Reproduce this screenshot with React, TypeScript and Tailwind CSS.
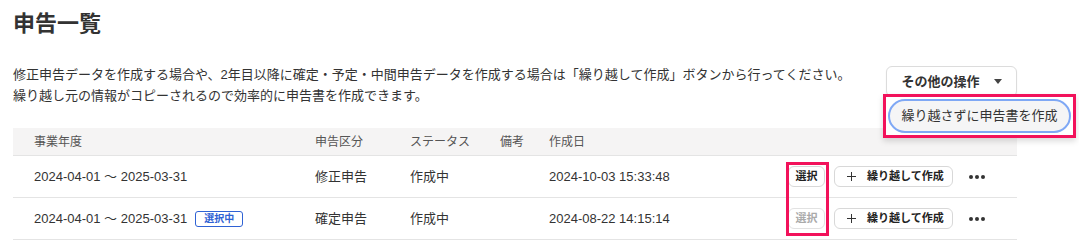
import React from "react";

type Row = {
  period: string;
  kind: string;
  status: string;
  created: string;
  current: boolean;
};

const rows: Row[] = [
  {
    period: "2024-04-01 ～ 2025-03-31",
    kind: "修正申告",
    status: "作成中",
    created: "2024-10-03 15:33:48",
    current: false,
  },
  {
    period: "2024-04-01 ～ 2025-03-31",
    kind: "確定申告",
    status: "作成中",
    created: "2024-08-22 14:15:14",
    current: true,
  },
];

function Caret() {
  return (
    <svg width="8" height="5" viewBox="0 0 8 5" className="ml-[14px]">
      <path d="M0 0h8L4 5z" fill="#444" />
    </svg>
  );
}

function Plus() {
  return (
    <svg width="9" height="9" viewBox="0 0 9 9">
      <path d="M4.5 0v9M0 4.5h9" stroke="#333" strokeWidth="1" />
    </svg>
  );
}

function TableRow({ row }: { row: Row }) {
  return (
    <div className="flex h-[42px] items-center border-b border-[#e4e4e4] pl-[21px] text-[13px] text-[#333]">
      <div className="flex w-[281px] items-center">
        <span>{row.period}</span>
        {row.current && (
          <span className="ml-[8px] flex h-[16px] items-center rounded-[3px] border border-[#2f62d4] px-[8px] text-[10px] font-bold text-[#2f62d4]">
            選択中
          </span>
        )}
      </div>
      <div className="w-[95px]">{row.kind}</div>
      <div className="w-[90px]">{row.status}</div>
      <div className="w-[49px]"></div>
      <div className="w-[239px]">{row.created}</div>
      <div className="flex items-center">
        <button
          className={
            row.current
              ? "flex h-[21px] w-[37px] items-center justify-center rounded-[6px] border border-[#e2e2e2] bg-white text-[11px] font-bold text-[#aaa]"
              : "flex h-[21px] w-[37px] items-center justify-center rounded-[6px] border border-[#d8d8d8] bg-white text-[11px] font-bold text-[#222]"
          }
        >
          選択
        </button>
        <button className="ml-[9px] flex h-[21px] w-[119px] items-center rounded-[6px] border border-[#d8d8d8] bg-white pl-[12px] text-[11px] font-bold text-[#222]">
          <Plus />
          <span className="ml-[11px]">繰り越して作成</span>
        </button>
        <span className="ml-[16px] flex gap-[2px]">
          <span className="h-[4px] w-[4px] rounded-full bg-[#333]"></span>
          <span className="h-[4px] w-[4px] rounded-full bg-[#333]"></span>
          <span className="h-[4px] w-[4px] rounded-full bg-[#333]"></span>
        </span>
      </div>
    </div>
  );
}

export default function App() {
  return (
    <div
      className="h-[247px] w-[1079px] overflow-hidden bg-white pl-[13px] pt-[8px] text-[#333]"
      style={{ fontFamily: '"Liberation Sans", "Noto Sans CJK JP", sans-serif' }}
    >
      <h1 className="text-[22px] font-bold leading-[32px] text-[#333]">申告一覧</h1>

      <div className="mt-[24px] flex w-[1004px] items-start justify-between">
        <p className="text-[13px] leading-[21px]">
          修正申告データを作成する場合や、2年目以降に確定・予定・中間申告データを作成する場合は「繰り越して作成」ボタンから行ってください。
          <br />
          繰り越し元の情報がコピーされるので効率的に申告書を作成できます。
        </p>
        <div className="relative mt-[2px]">
          <button className="flex h-[31px] w-[131px] items-center justify-center rounded-[6px] border border-[#dcdcdc] bg-white text-[13px] font-bold text-[#333] shadow-[0_1px_2px_rgba(0,0,0,0.06)]">
            その他の操作
            <Caret />
          </button>
          <div className="absolute left-[-3px] top-[28px] z-10 h-[44px] w-[193px] border-[3px] border-[#f2125b] bg-white p-[2px] shadow-[0_3px_6px_rgba(0,0,0,0.15)]">
            <div className="flex h-full w-full items-center justify-center rounded-full border-2 border-[#7fa8f5] bg-[#f5f5f6] text-[13px] text-[#333]">
              繰り越さずに申告書を作成
            </div>
          </div>
        </div>
      </div>

      <div className="relative mt-[22px] w-[1004px]">
        <div className="flex h-[28px] items-center border-b border-[#e4e4e4] bg-[#f5f4f4] pl-[21px] text-[12px] text-[#555]">
          <div className="w-[281px]">事業年度</div>
          <div className="w-[95px]">申告区分</div>
          <div className="w-[90px]">ステータス</div>
          <div className="w-[49px]">備考</div>
          <div>作成日</div>
        </div>
        {rows.map((row, i) => (
          <TableRow key={i} row={row} />
        ))}
        <div className="pointer-events-none absolute left-[773px] top-[34px] h-[74px] w-[43px] border-[3px] border-[#f2125b]"></div>
      </div>
    </div>
  );
}
